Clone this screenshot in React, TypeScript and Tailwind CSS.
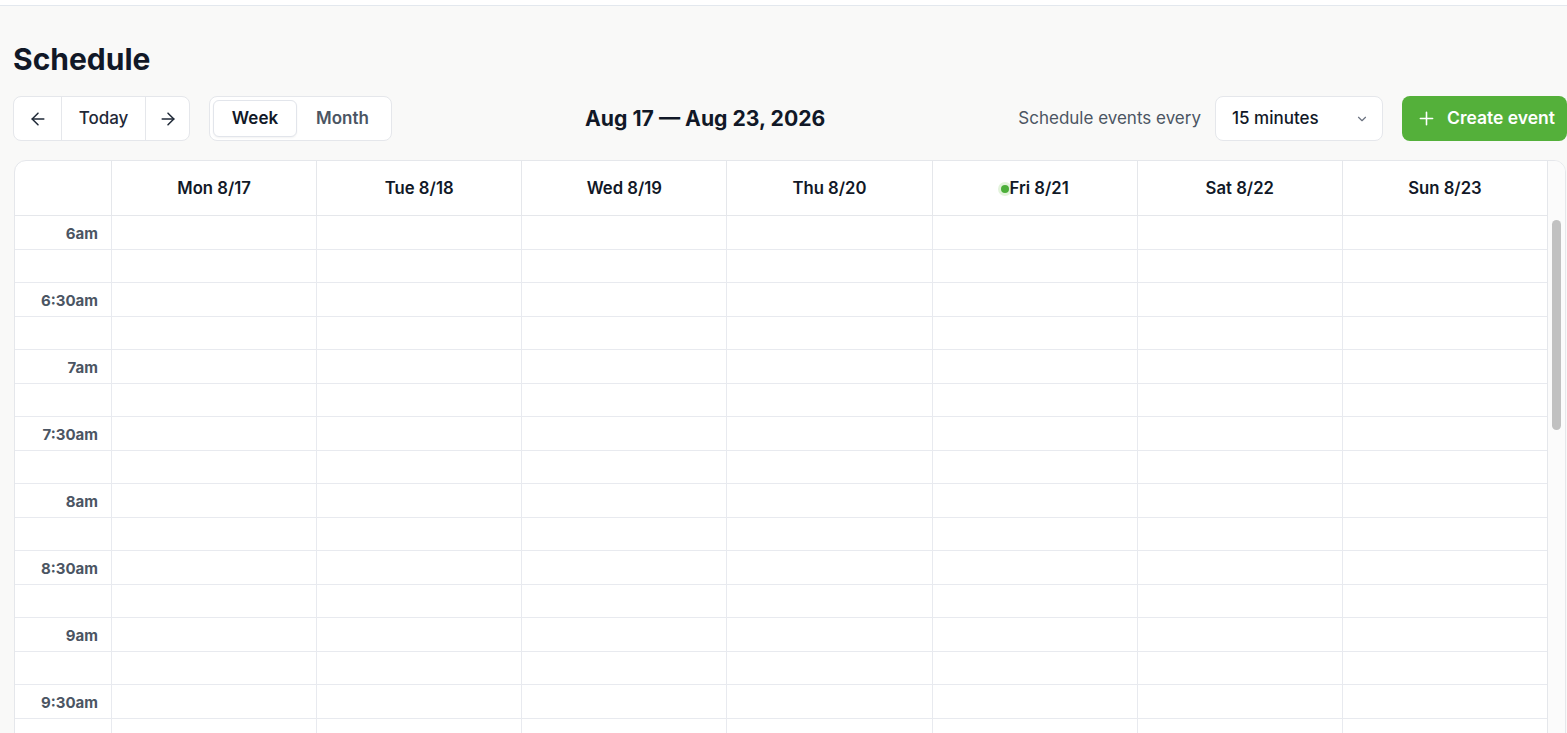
import React from "react";
import { ArrowLeft, ArrowRight, ChevronDown, Plus } from "lucide-react";

const days = ["Mon 8/17", "Tue 8/18", "Wed 8/19", "Thu 8/20", "Fri 8/21", "Sat 8/22", "Sun 8/23"];
const times = ["6am", "6:30am", "7am", "7:30am", "8am", "8:30am", "9am", "9:30am", ""];

export default function App() {
  const rows: string[] = [];
  times.forEach((t) => {
    rows.push(t);
    rows.push("");
  });
  return (
    <div className="h-screen overflow-hidden bg-[#f9f9f8] text-[#111827]" style={{ fontFamily: "Inter, 'Noto Sans', sans-serif" }}>
      <div className="h-[6px] bg-white border-b border-[#e3e8ee]" />
      <div className="pl-[13px] pr-0">
        <h1 className="mt-[35px] text-[30px] leading-[36px] font-bold text-[#111827]">Schedule</h1>
        <div className="mt-[19px] flex items-center h-[45px]">
          <div className="flex h-[45px] items-stretch rounded-lg border border-[#e5e7eb] bg-white">
            <button className="w-[47px] flex items-center justify-center text-[#1f2937]">
              <ArrowLeft size={20} strokeWidth={1.8} />
            </button>
            <button className="w-[84px] border-l border-[#e5e7eb] flex items-center justify-center text-[17px] font-medium text-[#1f2937]">
              Today
            </button>
            <button className="w-[44px] border-l border-[#e5e7eb] flex items-center justify-center text-[#1f2937]">
              <ArrowRight size={20} strokeWidth={1.8} />
            </button>
          </div>
          <div className="ml-[19px] flex h-[45px] w-[183px] items-center rounded-lg border border-[#e5e7eb] bg-white p-[3px]">
            <button className="h-[37px] w-[84px] rounded-md border border-[#e2e5eb] bg-white shadow-[0_1px_2px_rgba(0,0,0,0.05)] text-[17px] font-semibold text-[#111827]">
              Week
            </button>
            <button className="h-[37px] flex-1 text-[17px] font-semibold text-[#4b5563]">Month</button>
          </div>
          <div className="flex-1 text-center text-[21.2px] font-bold text-[#111827]">Aug 17 — Aug 23, 2026</div>
          <span className="text-[17px] text-[#4b5563]">Schedule events every</span>
          <div className="ml-[14px] flex h-[45px] w-[168px] items-center justify-between rounded-lg border border-[#e5e7eb] bg-white pl-[16px] pr-[13px]">
            <span className="text-[17px] font-medium text-[#111827]">15 minutes</span>
            <ChevronDown size={14} strokeWidth={2} className="text-[#6b7280]" />
          </div>
          <button className="ml-[19px] flex h-[45px] w-[165px] items-center gap-[10px] rounded-lg bg-[#54b03a] pl-[14px] text-[17.5px] font-semibold text-white">
            <Plus size={21} strokeWidth={1.8} />
            Create event
          </button>
        </div>
        <div className="mt-[19px] ml-px mr-px flex overflow-hidden rounded-t-xl border border-[#e5e7eb] bg-white">
          <div className="flex-1 min-w-0">
            <div className="grid grid-cols-[96px_repeat(7,minmax(0,1fr))] h-[55px] border-b border-[#e5e7eb]">
              <div />
              {days.map((d, i) => (
                <div key={d} className="border-l border-[#e5e7eb] flex items-center justify-center pt-[2px] text-[16.7px] font-semibold text-[#111827]">
                  {i === 4 ? (
                    <span className="inline-flex items-center">
                      <span className="mr-[1px] h-[8px] w-[8px] rounded-full bg-[#4caf3a] ring-[3px] ring-[#e3f3dc]" />
                      {d}
                    </span>
                  ) : (
                    d
                  )}
                </div>
              ))}
            </div>
            <div className="grid grid-cols-[96px_repeat(7,minmax(0,1fr))]">
              {rows.map((t, r) => (
                <React.Fragment key={r}>
                  <div className="h-[33.5px] border-b border-[#e8eaef] flex items-center justify-end pt-[3px] pr-[13px] text-[15px] font-bold text-[#4b5563]">
                    {t}
                  </div>
                  {days.map((d) => (
                    <div key={d} className="h-[33.5px] border-b border-l border-[#e8eaef]" />
                  ))}
                </React.Fragment>
              ))}
            </div>
          </div>
          <div className="w-[18px] border-l border-[#e5e7eb] bg-[#fbfbfb] pt-[59px] pl-[4px] pr-[4px]">
            <div className="h-[210px] rounded-full bg-[#c1c1c1]" />
          </div>
        </div>
      </div>
    </div>
  );
}
